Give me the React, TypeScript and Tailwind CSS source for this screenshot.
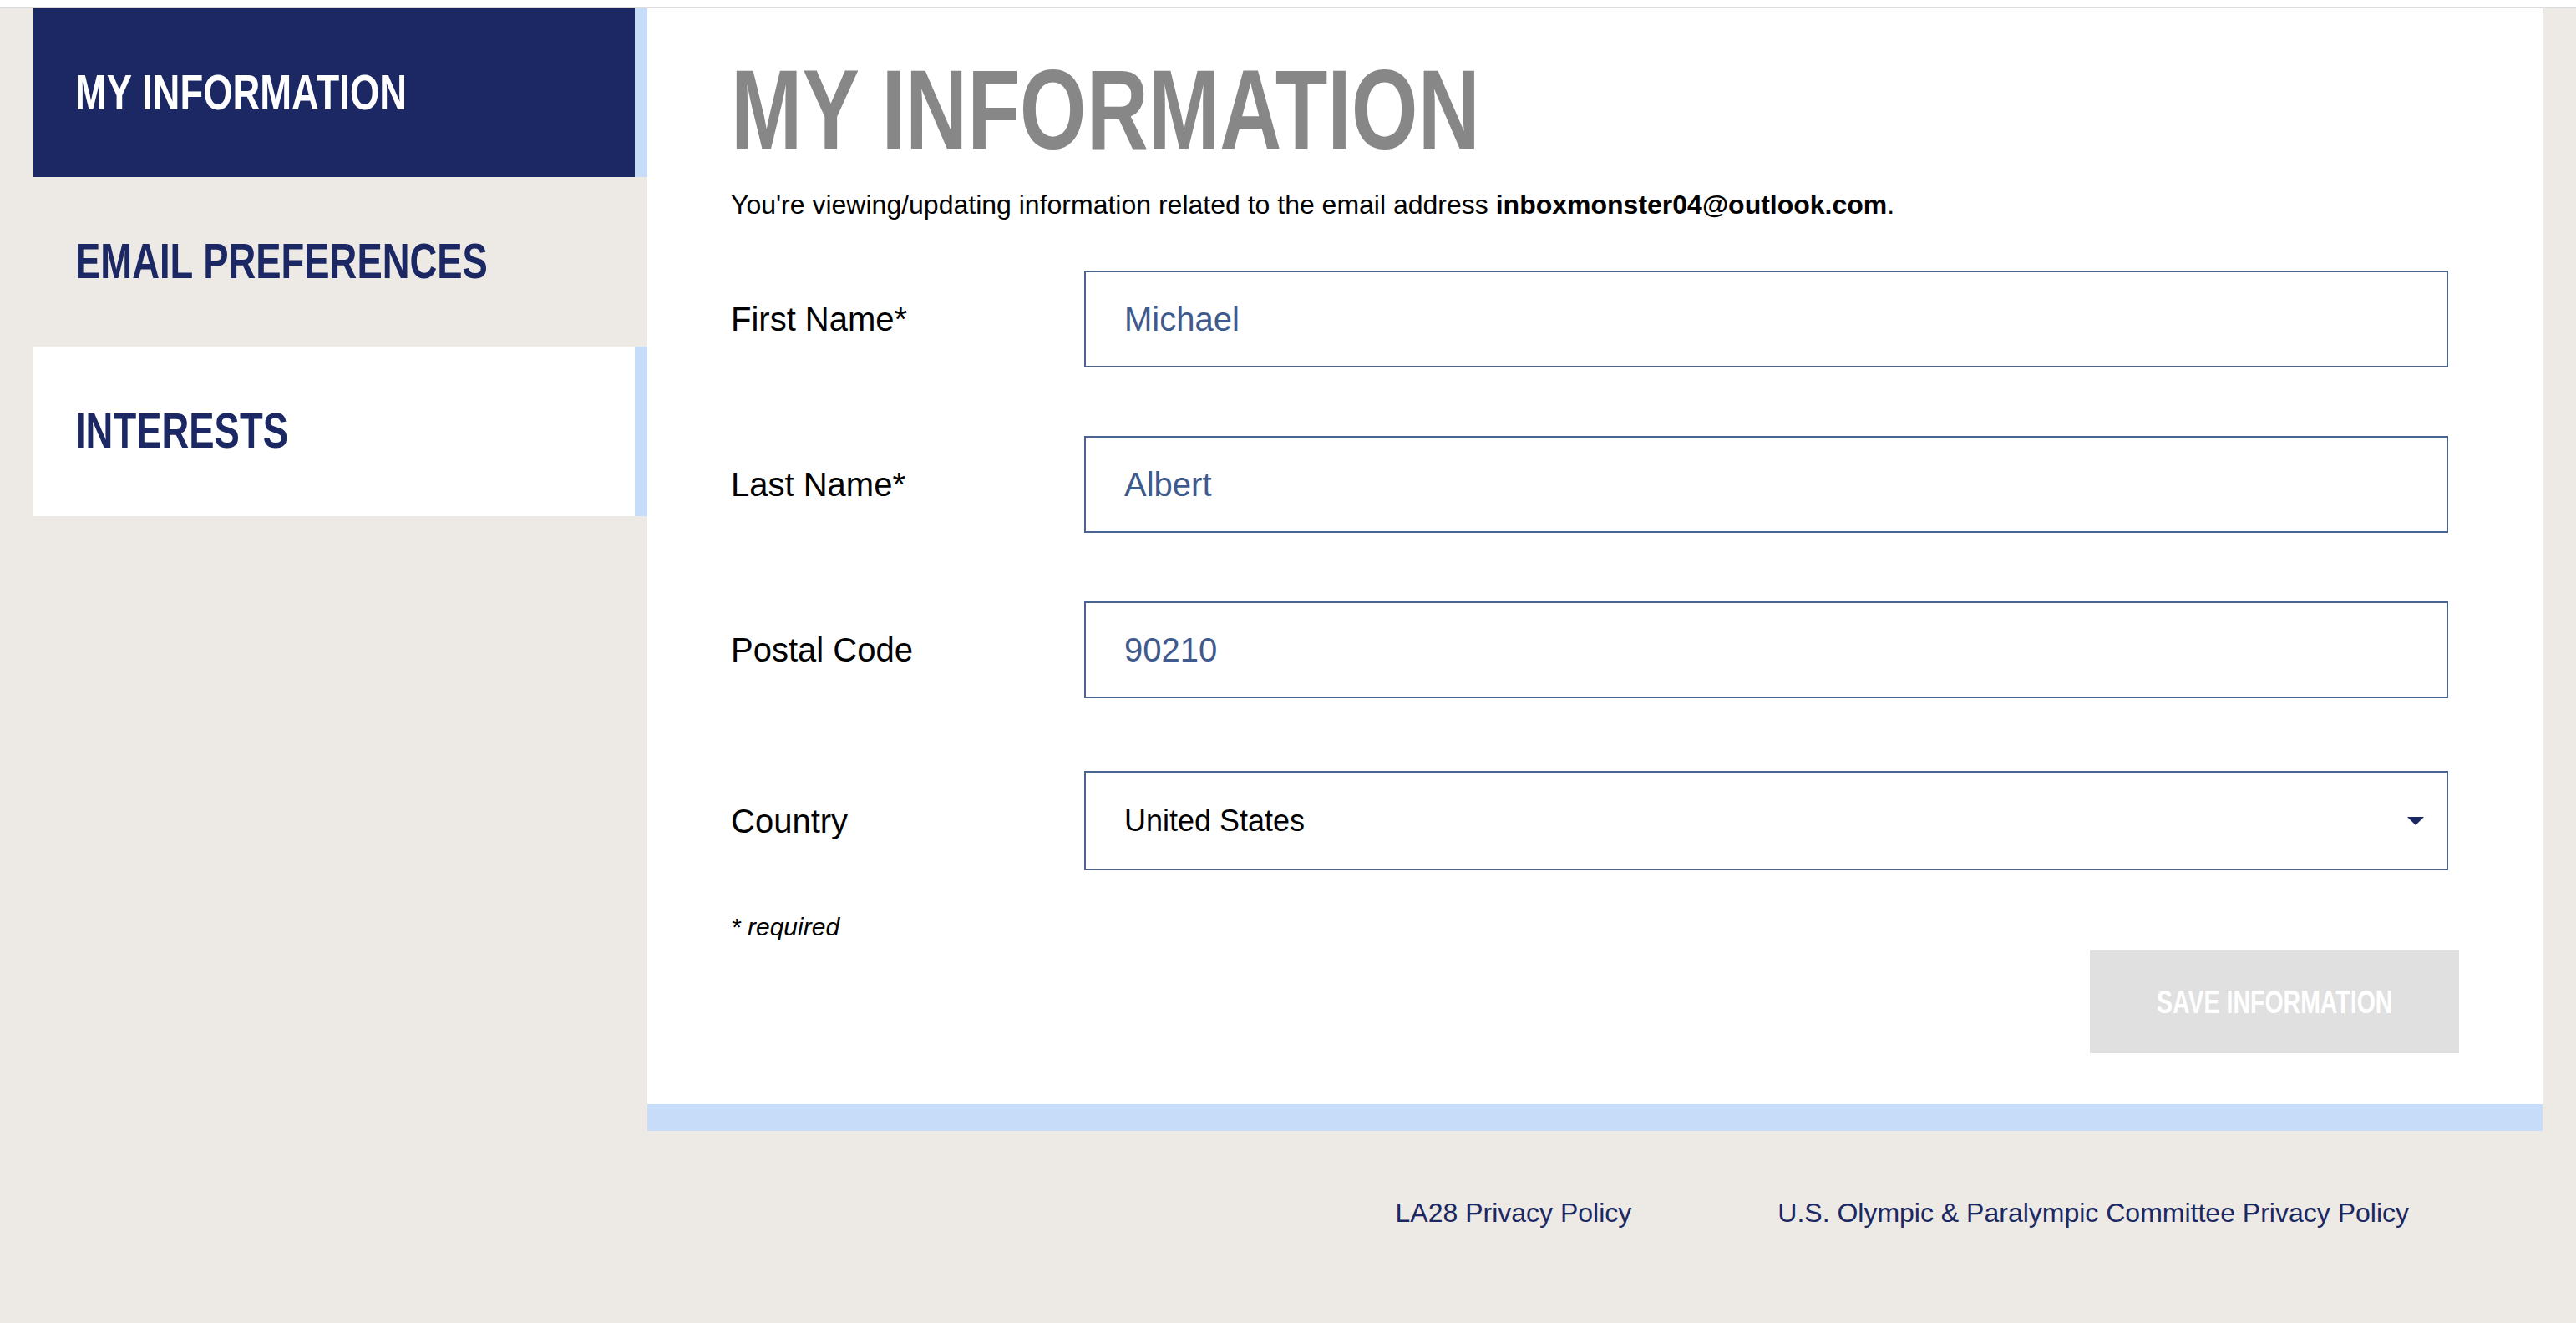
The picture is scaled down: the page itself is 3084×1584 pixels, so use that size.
import React from "react";

const tabs = [
  { label: "MY INFORMATION", active: true },
  { label: "EMAIL PREFERENCES", active: false },
  { label: "INTERESTS", active: false },
];

const fields = [
  { label: "First Name*", value: "Michael" },
  { label: "Last Name*", value: "Albert" },
  { label: "Postal Code", value: "90210" },
];

// no condensed face installed, so squeeze the bold sans
const condensed = "inline-block font-['Liberation_Sans',Arial,sans-serif] font-bold";

const Sidebar: React.FC = () => (
  <nav className="flex w-[735px] shrink-0 flex-col">
    {tabs.map((tab, i) => {
      const tone =
        i === 0
          ? "bg-[#1b2864] text-white border-r-[15px] border-[#c6dcf8]"
          : i === 1
          ? "text-[#1b2864]"
          : "bg-white text-[#1b2864] border-r-[15px] border-[#c6dcf8]";
      return (
        <a
          key={tab.label}
          href="#"
          className={`flex items-center pl-[50px] ${i === 0 ? "h-[202px]" : "h-[203px]"} ${tone}`}
        >
          <span className={`${condensed} origin-left scale-x-[0.77] whitespace-nowrap text-[59px] leading-none`}>
            {tab.label}
          </span>
        </a>
      );
    })}
  </nav>
);

const Field: React.FC<{ label: string; value: string }> = ({ label, value }) => (
  <div className="flex items-center pr-[13px]">
    <label className="w-[423px] shrink-0 text-[40px] text-black">{label}</label>
    <input
      readOnly
      value={value}
      className="h-[116px] flex-1 border-2 border-[#4a6491] bg-white px-[46px] text-[40px] text-[#3f5a8c] outline-none"
    />
  </div>
);

export default function App() {
  return (
    <div className="min-h-[1584px] bg-[#edeae5] font-['Liberation_Sans',Arial,sans-serif]">
      <div className="h-[10px] border-b-2 border-[#dcdcdc] bg-white" />

      <div className="flex pl-[40px] pr-[40px]">
        <Sidebar />

        <main className="flex-1 border-b-[32px] border-[#c6dcf8] bg-white pb-[61px] pl-[100px] pr-[100px] pt-[54px]">
          <h1
            className={`${condensed} origin-left scale-x-[0.76] whitespace-nowrap text-[135px] leading-none text-[#878787]`}
          >
            MY INFORMATION
          </h1>
          <p className="mt-[28px] text-[32px] leading-[36px] text-black">
            You're viewing/updating information related to the email address{" "}
            <strong className="font-bold">inboxmonster04@outlook.com</strong>.
          </p>

          <form className="mt-[61px] flex flex-col gap-[82px]">
            {fields.map((f) => (
              <Field key={f.label} label={f.label} value={f.value} />
            ))}
            <div className="mt-[5px] flex items-center pr-[13px]">
              <label className="w-[423px] shrink-0 text-[40px] text-black">Country</label>
              <div className="relative flex-1">
                <select
                  defaultValue="US"
                  className="h-[119px] w-full appearance-none border-2 border-[#4a6491] bg-white px-[46px] text-[36px] text-black outline-none"
                >
                  <option value="US">United States</option>
                </select>
                <svg
                  className="pointer-events-none absolute right-[29px] top-1/2 -translate-y-1/2"
                  width="20"
                  height="10"
                  viewBox="0 0 20 10"
                >
                  <path d="M0 0 L20 0 L10 10 Z" fill="#1b2864" />
                </svg>
              </div>
            </div>
          </form>

          <p className="mt-[50px] text-[30px] italic leading-[36px] text-black">* required</p>

          <div className="mt-[10px] flex justify-end">
            <button
              type="button"
              disabled
              className="flex h-[123px] w-[442px] items-center justify-center bg-[#e0e0e0] text-white"
            >
              <span className={`${condensed} scale-x-[0.75] whitespace-nowrap text-[38px] leading-none`}>
                SAVE INFORMATION
              </span>
            </button>
          </div>
        </main>
      </div>

      <footer className="flex justify-end gap-[175px] pb-[112px] pr-[200px] pt-[80px] text-[32px] leading-[36px] text-[#1b2864]">
        <a href="#">LA28 Privacy Policy</a>
        <a href="#">U.S. Olympic &amp; Paralympic Committee Privacy Policy</a>
      </footer>
    </div>
  );
}
